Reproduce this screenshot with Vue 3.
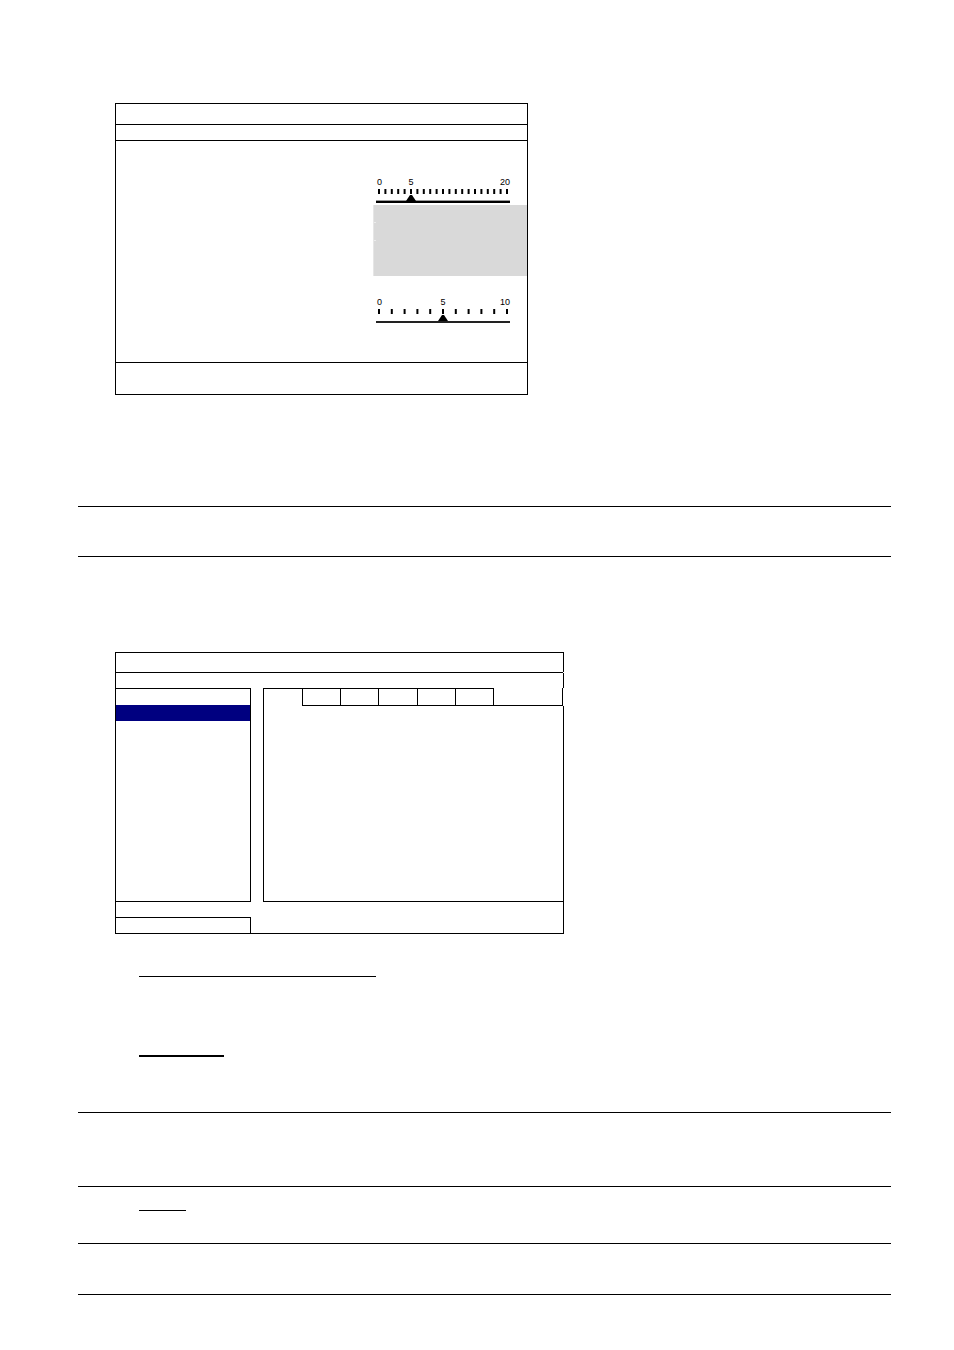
<template>
    <main class="page">
        <section class="window settings">
            <header class="window-title"></header>
            <div class="window-sub"></div>
            <div class="settings-body">
                <div class="settings-values">
                    <div v-for="s in scales" :key="s.id" class="scale" :class="s.id">
                        <svg class="scale-ticks" aria-hidden="true" width="138" height="18" viewBox="0 0 138 18">
                            <text x="3" y="9">0</text>
                            <text :x="tickX(5, s.max)" y="9" text-anchor="middle">5</text>
                            <text x="136" y="9" text-anchor="end">{{ s.max }}</text>
                            <rect v-for="n in s.max + 1" :key="n" :x="tickX(n - 1, s.max) - 1" y="13" width="2"
                                height="5" />
                        </svg>
                        <input v-model.number="s.value" type="range" min="0" :max="s.max" :aria-label="s.label" />
                        <div class="scale-axis"></div>
                    </div>
                    <div class="disabled-values">
                        <div v-for="n in 4" :key="n" class="disabled-row"></div>
                    </div>
                </div>
            </div>
            <footer class="settings-footer"></footer>
        </section>

        <div class="note note-first"></div>

        <section class="window explorer">
            <header class="window-title"></header>
            <div class="window-sub"></div>
            <div class="explorer-body">
                <nav class="menu">
                    <div class="menu-head"></div>
                    <div class="menu-item selected"></div>
                </nav>
                <div class="panel">
                    <div class="tabs">
                        <div v-for="n in 6" :key="n" class="tab" :class="{ active: n === 1 }"></div>
                        <div class="tabs-rest"></div>
                    </div>
                    <div class="panel-content"></div>
                </div>
            </div>
            <footer class="explorer-footer">
                <div class="status"></div>
            </footer>
        </section>

        <div class="heading heading-long"></div>
        <div class="heading heading-medium"></div>
        <div class="note note-tall"></div>
        <div class="heading heading-short"></div>
        <div class="note note-last"></div>
    </main>
</template>

<script setup>
import { ref } from 'vue'

const scales = ref([
    { id: 'fine', label: 'Value from 0 to 20', max: 20, value: 5 },
    { id: 'coarse', label: 'Value from 0 to 10', max: 10, value: 5 }
])

function tickX(value, max) {
    return 5 + (128 * value) / max
}
</script>

<style>
body {
    background-color: #fff;
}
</style>

<style scoped>
.page {
    box-sizing: border-box;
    display: flex;
    flex-direction: column;
    padding: 103px 63px 55px 78px;
    font-family: "Liberation Sans", Arial, sans-serif;
    color: #000;
}

.window {
    box-sizing: border-box;
    width: 100%;
    margin-left: 37px;
}

.window-title {
    height: 20px;
    border-bottom: 1px solid #000;
}

.window-sub {
    height: 15px;
}

.settings {
    max-width: 413px;
    border: 1px solid #000;

    .window-sub {
        border-bottom: 1px solid #000;
    }
}

.settings-body {
    display: flex;
    justify-content: flex-end;
    padding: 35px 0 39px;
}

.settings-values {
    display: flex;
    flex-direction: column;
    width: 154px;
}

.scale {
    width: 138px;
    margin-left: 1px;

    input {
        appearance: none;
        display: block;
        width: 100%;
        height: 6px;
        margin: 1px 0 0;
        background: none;

        &::-webkit-slider-thumb {
            appearance: none;
            width: 10px;
            height: 6px;
            background-color: #000;
            clip-path: polygon(40% 0, 60% 0, 100% 100%, 0 100%);
        }
    }
}

.scale-ticks {
    display: block;

    text {
        font-size: 9px;
    }
}

.scale-axis {
    height: 2px;
    margin: 0 2px;
    background-color: #222;
}

.fine {
    order: 1;

    .scale-axis {
        margin-top: -1px;
        border-top: 1px solid #999;
        background-color: #000;
    }
}

.disabled-values {
    order: 2;
    display: grid;
    grid-template-rows: 17px 18px 18px 18px;
    margin: 2px 0 20px;
    background-color: #d9d9d9;
}

.disabled-row {
    border-left: 1px solid #e6e6e6;

    &:nth-child(2),
    &:nth-child(3) {
        background: linear-gradient(#ececec, #ececec) 0 0 / 2px 1px no-repeat;
    }
}

.coarse {
    order: 3;
}

.settings-footer {
    height: 31px;
    border-top: 1px solid #000;
}

.explorer {
    max-width: 449px;
    border-top: 1px solid #000;
    border-left: 1px solid #000;

    .window-title {
        height: 19px;
        margin-right: 1px;
        box-shadow: 1px -1px #000;
    }

    .window-sub {
        border-right: 1px solid #000;
    }
}

.explorer-body {
    display: flex;
    gap: 12px;
}

.menu {
    width: 134px;
    border: 1px solid #000;
    border-left: 0;
}

.menu-head {
    height: 16px;
}

.menu-item {
    height: 16px;
}

.menu-item.selected {
    background-color: #000080;
}

.panel {
    flex: 1;
    border-left: 1px solid #000;
}

.tabs {
    display: grid;
    grid-template-columns: 39px 38px 38px 39px 38px 38px 1fr;
    height: 18px;
    margin-right: 1px;
}

.tab {
    box-sizing: border-box;
    border: 1px solid #000;
    border-left: 0;
}

.tab.active {
    border-bottom: 0;
}

.tabs-rest {
    border-right: 1px solid #000;
    border-bottom: 1px solid #000;
}

.panel-content {
    height: 195px;
    border-right: 1px solid #000;
    border-bottom: 1px solid #000;
}

.explorer-footer {
    border-right: 1px solid #000;
    border-bottom: 1px solid #000;
    padding-top: 15px;
}

.status {
    width: 134px;
    height: 15px;
    border-top: 1px solid #000;
    border-right: 1px solid #000;
}

.note {
    border-top: 1px solid #000;
    border-bottom: 1px solid #000;
}

.note-first {
    height: 49px;
    margin: 111px 0 95px;
}

.note-tall {
    height: 73px;
    margin-top: 55px;
}

.note-last {
    height: 50px;
    margin-top: 32px;
}

.heading {
    margin-left: 61px;
    border-bottom: 1px solid #000;
}

.heading-long {
    width: 237px;
    height: 42px;
}

.heading-medium {
    width: 85px;
    height: 78px;
    border-bottom-width: 2px;
}

.heading-short {
    width: 47px;
    height: 23px;
}
</style>
